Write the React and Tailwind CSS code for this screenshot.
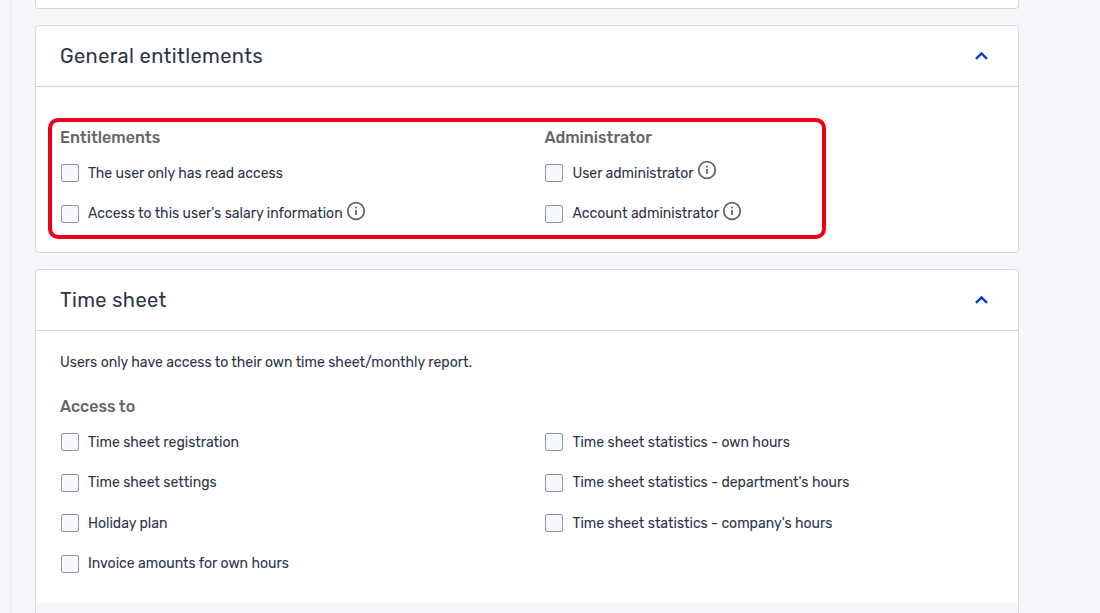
import { useState } from "react";

const entitlements = [
  { label: "The user only has read access" },
  { label: "Access to this user's salary information", info: true },
];

const administrator = [
  { label: "User administrator", info: true },
  { label: "Account administrator", info: true },
];

const timeSheetAccess = [
  { label: "Time sheet registration" },
  { label: "Time sheet settings" },
  { label: "Holiday plan" },
  { label: "Invoice amounts for own hours" },
];

const timeSheetStatistics = [
  { label: "Time sheet statistics - own hours" },
  { label: "Time sheet statistics - department's hours" },
  { label: "Time sheet statistics - company's hours" },
];

function InfoIcon() {
  return (
    <svg
      viewBox="0 0 20 20"
      className="w-5 h-5 ml-[3px] -mt-[6px] shrink-0"
      fill="none"
      stroke="#666666"
    >
      <circle cx="10" cy="10" r="8.3" strokeWidth="1.8" />
      <path d="M10 9v5" strokeWidth="1.8" />
      <circle cx="10" cy="6.6" r="1.05" fill="#666666" stroke="none" />
    </svg>
  );
}

function CheckItem({ label, info }) {
  return (
    <div className="flex items-center h-[40.5px]">
      <label className="flex items-center cursor-pointer">
        <input
          type="checkbox"
          className="appearance-none w-[18px] h-[18px] ml-px mr-[9px] shrink-0 rounded-[2px] border border-[#90959f] bg-[#f6f8fd] checked:bg-[#0a3ad6]"
        />
        <span className="pt-px text-[14px] leading-5 whitespace-nowrap">
          {label}
        </span>
      </label>
      {info && <InfoIcon />}
    </div>
  );
}

function CheckGroup({ title, items }) {
  return (
    <div className="w-[484.4px] shrink-0">
      <h3 className="h-5 mb-[4.9px] text-[16px] leading-5 font-medium text-[#666666]">
        {title}
      </h3>
      {items.map((item) => (
        <CheckItem key={item.label} {...item} />
      ))}
    </div>
  );
}

function Panel({ title, className, children }) {
  const [open, setOpen] = useState(true);

  return (
    <section
      className={`rounded-[4px] border border-[#d8dae0] bg-white ${className}`}
    >
      <header
        onClick={() => setOpen(!open)}
        className="flex items-center justify-between h-[61px] pl-6 pr-[29px] border-b border-[#d3d5da] cursor-pointer"
      >
        <h2 className="text-[20px] leading-7 tracking-[0.4px]">{title}</h2>
        <svg
          viewBox="0 0 15 10"
          className={`w-[15px] h-[10px] ${open ? "" : "rotate-180"}`}
          fill="none"
          stroke="#0a3ad6"
          strokeWidth="2.4"
        >
          <path d="M2 7.9 7.5 2.5l5.5 5.4" />
        </svg>
      </header>
      {open && children}
    </section>
  );
}

function App() {
  return (
    <div className="flex h-[613px] overflow-hidden bg-[#f6f7fb] text-[#2b3448] font-['Rubik','Roboto',sans-serif]">
      <div className="w-[11px] shrink-0 border-r border-[#eaecf1]" />
      <main className="w-[984px] ml-6">
        <div className="h-[9px] rounded-b-[4px] border border-t-0 border-[#d8dae0] bg-white" />

        <Panel title="General entitlements" className="relative mt-4 h-[228px]">
          <div className="flex pl-6 pt-[41px]">
            <CheckGroup title="Entitlements" items={entitlements} />
            <CheckGroup title="Administrator" items={administrator} />
          </div>
          <div className="absolute left-3 top-[92px] w-[778px] h-[121px] rounded-[10px] border-4 border-[#ee0016] pointer-events-none" />
        </Panel>

        <Panel title="Time sheet" className="mt-4 h-[400px]">
          <p className="pl-6 pt-[22px] text-[14px] leading-5">
            Users only have access to their own time sheet/monthly report.
          </p>
          <div className="flex h-[205px] mt-6 pl-6">
            <CheckGroup title="Access to" items={timeSheetAccess} />
            <div className="pt-[24.9px]">
              {timeSheetStatistics.map((item) => (
                <CheckItem key={item.label} {...item} />
              ))}
            </div>
          </div>
          <div className="h-10 bg-[#f6f7fb]" />
        </Panel>
      </main>
    </div>
  );
}

export default App;
